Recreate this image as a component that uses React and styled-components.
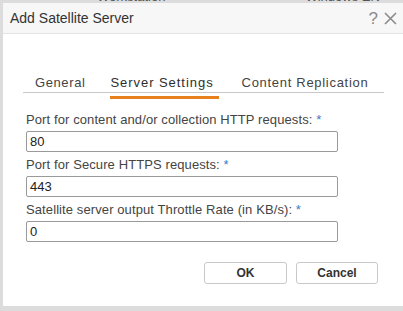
import React from "react";
import styled, { createGlobalStyle } from "styled-components";

const Global = createGlobalStyle`
  html, body { margin: 0; padding: 0; background: #dcdcdc; }
  body { font-family: "Liberation Sans", Arial, sans-serif; width: 403px; height: 311px; overflow: hidden; }
`;

const Page = styled.div`
  width: 403px;
  height: 311px;
  display: flex;
  flex-direction: column;
  background: #dcdcdc;
`;

const Backdrop = styled.div`
  height: 3px;
  overflow: hidden;
  display: flex;
  color: #555;
  font-size: 13px;
  line-height: 13px;
`;

const BackText = styled.span`
  margin-top: -10px;
  margin-left: ${(p) => p.$left}px;
  white-space: nowrap;
`;

const Dialog = styled.div`
  margin-left: 3px;
  width: 400px;
  height: 303px;
  background: #fff;
  display: flex;
  flex-direction: column;
`;

const TitleBar = styled.div`
  height: 30px;
  background: #f7f7f7;
  border-bottom: 1px solid #e4e4e4;
  display: flex;
  align-items: center;
  justify-content: space-between;
  padding: 0 6px 0 7px;
`;

const Title = styled.div`
  font-size: 14px;
  color: #333;
  padding-bottom: 1px;
`;

const TitleIcons = styled.div`
  display: flex;
  align-items: center;
  gap: 6px;
  color: #8a8a8a;
`;

const HelpIcon = styled.span`
  font-size: 17px;
  line-height: 17px;
`;

const Body = styled.div`
  padding: 42px 0 0 20px;
  display: flex;
  flex-direction: column;
`;

const TabList = styled.div`
  display: flex;
  border-bottom: 1px solid #c8c8c8;
  padding-left: 12px;
  width: 361px;
  box-sizing: border-box;
`;

const Tab = styled.div`
  position: relative;
  font-size: 13px;
  letter-spacing: ${(p) => p.$ls}px;
  color: ${(p) => (p.$active ? "#2e2e2e" : "#444")};
  margin-right: ${(p) => p.$gap}px;
  padding-bottom: 3px;
  line-height: 13px;
  &::after {
    content: "";
    display: ${(p) => (p.$active ? "block" : "none")};
    position: absolute;
    left: 0;
    right: -5px;
    bottom: -7px;
    height: 3px;
    background: #e8801e;
  }
`;

const Form = styled.div`
  padding: 19px 0 0 3px;
  display: flex;
  flex-direction: column;
`;

const Label = styled.div`
  font-size: 13px;
  letter-spacing: 0.1px;
  color: #444;
  line-height: 15px;
  margin-bottom: 4px;
`;

const Star = styled.span`
  color: #3a7bc8;
`;

const Input = styled.input`
  width: 312px;
  height: 21px;
  box-sizing: border-box;
  border: 1px solid #9a9a9a;
  border-radius: 2px;
  padding: 0 3px;
  font-family: "Liberation Sans", Arial, sans-serif;
  font-size: 13px;
  color: #222;
  margin-bottom: 5px;
  outline: none;
`;

const Actions = styled.div`
  display: flex;
  justify-content: flex-end;
  gap: 9px;
  padding: 15px 25px 0 0;
`;

const Button = styled.button`
  width: ${(p) => p.$w}px;
  height: 22px;
  background: #fff;
  border: 1px solid #c9c9c9;
  border-radius: 3px;
  font-family: "Liberation Sans", Arial, sans-serif;
  font-weight: bold;
  font-size: 12px;
  color: #333;
`;

function Field({ label, value }) {
  return (
    <>
      <Label>
        {label} <Star>*</Star>
      </Label>
      <Input defaultValue={value} />
    </>
  );
}

export default function App() {
  return (
    <Page>
      <Global />
      <Backdrop>
        <BackText $left={97}>Workstation</BackText>
        <BackText $left={140}>Windows EN</BackText>
      </Backdrop>
      <Dialog>
        <TitleBar>
          <Title>Add Satellite Server</Title>
          <TitleIcons>
            <HelpIcon>?</HelpIcon>
            <svg width="13" height="13" viewBox="0 0 13 13">
              <path d="M1 1L12 12M12 1L1 12" stroke="#8a8a8a" strokeWidth="1.6" />
            </svg>
          </TitleIcons>
        </TitleBar>
        <Body>
          <TabList>
            <Tab $gap={25} $ls={0.6}>General</Tab>
            <Tab $active $gap={28} $ls={0.95}>Server Settings</Tab>
            <Tab $gap={0} $ls={0.7}>Content Replication</Tab>
          </TabList>
          <Form>
            <Field label="Port for content and/or collection HTTP requests:" value="80" />
            <Field label="Port for Secure HTTPS requests:" value="443" />
            <Field label="Satellite server output Throttle Rate (in KB/s):" value="0" />
          </Form>
          <Actions>
            <Button $w={83}>OK</Button>
            <Button $w={82}>Cancel</Button>
          </Actions>
        </Body>
      </Dialog>
    </Page>
  );
}
